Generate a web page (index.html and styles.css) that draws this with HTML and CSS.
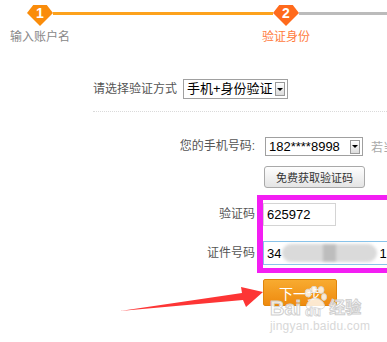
FILE: index.html
```html
<!DOCTYPE html>
<html lang="zh-CN">
<head>
    <meta charset="UTF-8">
    <meta name="viewport" content="width=device-width, initial-scale=1.0">
    <title>验证身份</title>
    <link rel="stylesheet" href="styles.css">
</head>
<body>
    <div class="page">
        <div class="steps">
            <div class="badge b1">1</div>
            <div class="bar"></div>
            <div class="badge b2">2</div>
            <div class="bar todo"></div>
            <div class="step-label first">输入账户名</div>
            <div class="step-label cur">验证身份</div>
        </div>

        <div class="method">
            <span class="method-lbl">请选择验证方式</span>
            <span class="select sel-method"><span class="val">手机+身份验证</span><span class="drop"></span></span>
        </div>

        <div class="row row-phone">
            <span class="lbl">您的手机号码:</span>
            <span class="select sel-phone"><span class="val">182****8998</span><span class="drop"></span></span>
            <span class="hint">若当前手机号已停用</span>
        </div>
        <div class="row row-btn">
            <span class="lbl"></span>
            <button class="btn-code">免费获取验证码</button>
        </div>
        <div class="row row-code">
            <span class="lbl">验证码</span>
            <input class="inp inp-code" value="625972" readonly>
        </div>
        <div class="row row-id">
            <span class="lbl">证件号码</span>
            <div class="inp inp-id">34<span class="blur"><i></i><i class="dark"></i><i></i></span>1</div>
        </div>
        <div class="row row-next">
            <span class="lbl"></span>
            <button class="btn-next">下一步</button>
        </div>

        <div class="highlight"></div>

        <svg class="mark" width="387" height="342" viewBox="0 0 387 342">
            <polygon points="120,311 242,293 241,287 263,292 246,307 243,300" fill="#fd3535"/>
        </svg>

        <div class="watermark">
            <div class="wm-logo">Bai<svg class="paw" width="24" height="32" viewBox="0 0 24 32">
                <ellipse cx="5" cy="7" rx="3" ry="4"/>
                <ellipse cx="11" cy="3.5" rx="3" ry="3.5"/>
                <ellipse cx="18" cy="4" rx="3" ry="3.5"/>
                <ellipse cx="21" cy="11" rx="2.6" ry="3.4"/>
                <path d="M5 16 Q12 8 20 16 Q24 22 18 23 Q12 20 6 23 Q1 22 5 16 Z"/>
                <text x="2" y="30">du</text>
            </svg><span class="wm-cn">经验</span></div>
            <div class="wm-url">jingyan.baidu.com</div>
        </div>
    </div>
</body>
</html>
```

FILE: styles.css
```css
body {
    margin: 0;
    font-family: "Liberation Sans", "Noto Sans CJK SC", sans-serif;
    font-size: 12px;
    color: #555;
    background: #fff;
    overflow: hidden;
}
.page {
    position: relative;
    width: 387px;
    height: 342px;
    overflow: hidden;
}

/* steps */
.steps {
    display: grid;
    grid-template-columns: 26px 220px 26px 1fr;
    grid-template-rows: 21px auto;
    padding: 5px 0 0 27px;
}
.badge {
    width: 26px;
    height: 21px;
    clip-path: polygon(24% 0, 76% 0, 100% 38%, 50% 100%, 0 38%);
    color: #fff;
    font-weight: bold;
    font-size: 14px;
    line-height: 16px;
    text-align: center;
}
.b1 { background: #fa8c0a; }
.b2 { background: #ff6a1c; }
.bar {
    height: 3px;
    margin-top: 7px;
    background: #fda21c;
}
.bar.todo { background: #bbb; }
.step-label {
    grid-row: 2;
    justify-self: center;
    white-space: nowrap;
    margin-top: 3px;
    line-height: 17px;
    color: #888;
}
.step-label.first { grid-column: 1; }
.step-label.cur { grid-column: 3; color: #ff7b3d; }

/* method */
.method {
    display: flex;
    align-items: center;
    margin: 33px 0 0 93px;
    padding-bottom: 12px;
    border-bottom: 1px dotted #dadada;
}
.method-lbl { line-height: 17px; }

.select {
    display: inline-flex;
    align-items: center;
    flex: none;
    box-sizing: border-box;
    height: 20px;
    padding: 0 2px 0 3px;
    border: 1px solid #a0a0a0;
    background: #fff;
    color: #000;
    font-size: 13px;
    white-space: nowrap;
}
.select .val {
    flex: 1;
    line-height: 18px;
}
.select .drop {
    display: flex;
    align-items: center;
    justify-content: center;
    box-sizing: border-box;
    width: 10px;
    height: 14px;
    border: 1px solid #9a9a9a;
    background: linear-gradient(#fff, #dcdcdc);
}
.select .drop::after {
    content: "";
    border-left: 3px solid transparent;
    border-right: 3px solid transparent;
    border-top: 3px solid #000;
}
.sel-method {
    width: 105px;
    margin-left: 6px;
}
.sel-phone {
    width: 98px;
    height: 19px;
    margin-left: 1px;
}

/* form rows */
.row {
    display: flex;
    align-items: center;
    margin-left: 93px;
}
.row > * { flex: none; }
.row .lbl {
    width: 162px;
    margin-right: 9px;
    text-align: right;
    line-height: 17px;
}
.row-phone { margin-top: 25px; }
.row-btn { margin-top: 10px; }
.row-code { margin-top: 15px; }
.row-id { margin-top: 15px; }
.row-next { margin-top: 14px; }

.hint {
    margin-left: 8px;
    color: #aaa;
    white-space: nowrap;
}
.btn-code {
    width: 101px;
    height: 22px;
    padding: 0;
    border: 1px solid #a9a9a9;
    border-radius: 3px;
    background: linear-gradient(#fefefe, #e4e4e4);
    font-family: inherit;
    font-size: 11px;
    color: #333;
}
.inp {
    box-sizing: border-box;
    height: 23px;
    margin: 0 0 0 -1px;
    padding: 0 3px;
    border: 1px solid #d4d4d4;
    font-family: inherit;
    font-size: 13px;
    color: #000;
    outline: none;
}
.inp-code { width: 73px; }
.inp-id {
    display: flex;
    align-items: center;
    width: 140px;
    height: 24px;
    border-color: #88c3ea;
    white-space: nowrap;
    overflow: hidden;
}
.blur {
    display: inline-flex;
    flex: none;
    width: 95px;
    height: 18px;
    margin: 0 2px 0 1px;
    border-radius: 9px;
    background: #dadada;
    filter: blur(1.5px);
}
.blur i { flex: 1; }
.blur i.dark {
    flex: none;
    width: 13px;
    background: #bdbdbd;
}
.btn-next {
    width: 74px;
    height: 27px;
    margin-left: -1px;
    padding: 0;
    border: 1px solid #e0850c;
    border-radius: 2px;
    background: linear-gradient(#f8ab30, #ee8a0f);
    font-family: inherit;
    font-size: 14px;
    color: #fff;
}

/* annotations */
.highlight {
    position: absolute;
    left: 257px;
    top: 195px;
    width: 140px;
    height: 78px;
    box-sizing: border-box;
    border: 5px solid #f31ef3;
    border-left-width: 6px;
    pointer-events: none;
}
.mark {
    position: absolute;
    left: 0;
    top: 0;
    pointer-events: none;
}
.watermark {
    position: absolute;
    left: 270px;
    top: 286px;
    pointer-events: none;
}
.wm-logo {
    display: flex;
    align-items: flex-end;
    font-weight: bold;
    font-size: 20px;
    line-height: 22px;
    color: rgba(255, 255, 255, 0.85);
    -webkit-text-stroke: 1px #cfcfcf;
}
.wm-cn {
    font-size: 16px;
    margin-left: 1px;
}
.paw {
    margin: 0 1px 1px 2px;
    fill: rgba(255, 255, 255, 0.8);
    stroke: #d2d2d2;
    stroke-width: 0.8;
}
.paw text {
    font-family: "Liberation Sans", sans-serif;
    font-size: 13px;
    font-weight: bold;
}
.wm-url {
    margin-top: 1px;
    font-size: 12px;
    line-height: 13px;
    letter-spacing: 0.2px;
    color: #d8d8d8;
}
```
